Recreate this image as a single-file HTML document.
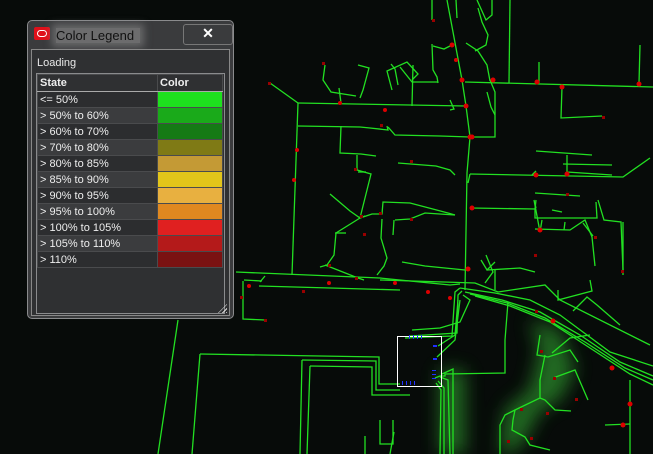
<!DOCTYPE html>
<html><head><meta charset="utf-8"><style>
body{margin:0;width:653px;height:454px;overflow:hidden;background:#070b09;font-family:"Liberation Sans",sans-serif;position:relative}
svg{position:absolute;left:0;top:0}
.win{position:absolute;left:27px;top:20px;width:207px;height:299px;background:#3a3b3d;border:1px solid #8a8b8d;border-radius:5px;box-sizing:border-box}
.ico{position:absolute;left:6px;top:6px;width:16px;height:13px;background:#e0101a;border-radius:2px}
.ico:after{content:"";position:absolute;left:3px;top:3px;width:8px;height:5px;border:1px solid #fff;border-radius:4px}
.ttext{position:absolute;left:28px;top:7px;font-size:13px;color:#111;background:rgba(150,150,150,0.55);padding:0 6px 0 0;box-shadow:0 0 8px 4px rgba(150,150,150,0.5)}
.close{position:absolute;left:155px;top:3px;width:48px;height:19px;border:1px solid #777;border-radius:3px;background:#3a3b3d;color:#fff;font-weight:bold;font-size:14px;text-align:center;line-height:17px}
.panel{position:absolute;left:3px;top:28px;width:199px;height:267px;border:1px solid #888;background:#2f3032;box-sizing:border-box}
.load{position:absolute;left:5px;top:7px;font-size:11px;color:#e8e8e8}
table{position:absolute;left:5px;top:24px;border-collapse:collapse;font-size:11px;color:#eee}
td{height:15px;padding:0 0 0 2px;border:1px solid #4a4b4d;white-space:nowrap}
tr.h td{height:16px;font-weight:bold;border-bottom:1px solid #aaa}
tr:nth-child(even) td{background:#2c2d2f} tr:nth-child(odd) td{background:#3b3c3e}
tr.h td{background:#2f3032}
.tb{position:absolute;left:4px;top:23px;width:187px;height:239px;border:1px solid #8a8b8d}
.grip{position:absolute;right:2px;bottom:2px;width:9px;height:9px;background:repeating-linear-gradient(135deg,#ddd 0 1px,transparent 1px 3px);clip-path:polygon(100% 0,100% 100%,0 100%)}
</style></head><body>
<svg width="653" height="454" viewBox="0 0 653 454">
<defs><filter id="b" x="-50%" y="-50%" width="200%" height="200%"><feGaussianBlur stdDeviation="9"/></filter></defs>
<g filter="url(#b)" fill="#2a8a2a" opacity="0.75">
<path d="M530 320 L560 330 L575 370 L560 400 L540 410 L525 440 L510 454 L500 454 L505 410 L530 390 L540 350 Z"/>
<rect x="440" y="370" width="25" height="84"/>
</g>
<g stroke="#22e022" stroke-width="1.3" fill="none">
<polyline points="447,0 462,80 466,106 470,137 467,173 465,290"/>
<polyline points="465,82 653,87"/>
<line x1="510" y1="0" x2="509" y2="83"/>
<polyline points="298,103 466,106"/>
<polyline points="298,103 292,275"/>
<polyline points="298,103 270,83"/>
<polyline points="298,126 360,127 370,128 388,130 387,126"/>
<polyline points="388,127 395,135 440,136 470,137 490,137 495,137 495,92 490,80"/>
<polyline points="470,174 623,177 650,158"/>
<polyline points="468,183 470,174"/>
<polyline points="536,151 592,155"/>
<polyline points="567,155 567,172 612,175"/>
<polyline points="563,164 612,165"/>
<polyline points="536,171 532,175"/>
<polyline points="536,200 535,209 535,218 597,218 596,202"/>
<polyline points="471,208 535,209"/>
<polyline points="535,193 580,196"/>
<polyline points="536,208 534,200 540,232 542,220"/>
<polyline points="535,229 570,230 585,220 592,237 595,266"/>
<polyline points="565,222 564,230"/>
<polyline points="598,200 604,220 621,222 623,270"/>
<polyline points="623,222 623,275"/>
<polyline points="562,212 552,210"/>
<polyline points="583,223 593,236"/>
<polyline points="330,194 350,211 360,218 365,216"/>
<polyline points="360,218 336,233 334,255 327,265 320,267"/>
<polyline points="335,233 346,233"/>
<polyline points="360,218 372,214 382,214 383,202 410,203 448,213 455,215"/>
<polyline points="382,219 381,238 387,258 384,266 377,275"/>
<polyline points="325,265 358,278 364,280"/>
<polyline points="341,126 340,153 361,154 376,156"/>
<polyline points="357,155 357,170 371,174 360,218"/>
<polyline points="358,172 366,172"/>
<polyline points="395,220 410,219 425,213 455,215"/>
<polyline points="450,110 454,109 450,100"/>
<polyline points="392,90 387,71 407,62 418,74 412,80"/>
<polyline points="358,65 369,68 363,90 360,98"/>
<polyline points="325,65 323,80 331,92 356,96"/>
<polyline points="339,88 341,103"/>
<polyline points="391,64 395,69 398,85"/>
<polyline points="432,0 432,20"/>
<polyline points="456,0 457,18"/>
<polyline points="477,0 486,20 492,15 492,0"/>
<polyline points="478,8 482,22 488,35 486,45 475,51"/>
<polyline points="466,43 478,51 487,65 490,81"/>
<polyline points="432,44 433,70 437,77 438,83"/>
<polyline points="433,46 444,49 452,45"/>
<polyline points="400,67 412,82 438,82"/>
<polyline points="413,65 412,106"/>
<polyline points="539,62 539,83"/>
<polyline points="640,45 639,83"/>
<polyline points="562,87 561,118 602,116"/>
<polyline points="487,92 491,107 495,115"/>
<polyline points="398,163 436,166 450,170 455,175"/>
<polyline points="394,220 393,235"/>
<polyline points="402,262 425,266 445,268 465,270"/>
<polyline points="486,255 493,272 485,283"/>
<polyline points="481,260 487,270 495,262"/>
<polyline points="487,270 520,268 535,272"/>
<polyline points="495,270 495,290"/>
<polyline points="236,272 380,278 450,285 460,284"/>
<polyline points="259,286 330,288 400,290"/>
<polyline points="244,280 262,281"/>
<polyline points="243,281 243,319 265,320"/>
<polyline points="260,282 265,276"/>
<polyline points="178,320 158,454"/>
<polyline points="200,354 379,357 379,384 400,384"/>
<polyline points="302,360 376,361 376,390 400,390"/>
<polyline points="310,366 372,367 372,395 410,395"/>
<polyline points="200,354 192,454"/>
<polyline points="302,360 300,454"/>
<polyline points="310,366 307,454"/>
<polyline points="380,420 380,444 393,444 393,420"/>
<polyline points="365,436 365,454"/>
<polyline points="394,432 390,454"/>
<polyline points="380,280 475,283 498,292 545,285 560,300 650,345"/>
<polyline points="412,330 440,328 460,322 470,300 463,295"/>
<polyline points="410,336 457,333 458,295 462,291"/>
<polyline points="405,338 452,336 455,292 460,288"/>
<polyline points="460,288 495,293 530,300 560,315 610,352 653,366"/>
<polyline points="465,292 502,300 540,312 580,335 620,362 653,376"/>
<polyline points="470,294 507,303 545,318 585,342 625,368 653,380"/>
<polyline points="475,296 510,306 550,322 590,348 630,374 653,385"/>
<polyline points="508,302 505,340 505,373 445,374 445,376 440,376 435,378"/>
<polyline points="442,374 453,369 453,454"/>
<polyline points="440,377 448,380 450,454"/>
<polyline points="438,381 444,388 444,454"/>
<polyline points="436,383 441,390 440,454"/>
<polyline points="437,357 455,340 460,300"/>
<polyline points="438,346 455,335 458,300"/>
<polyline points="558,290 558,300 592,291 590,280"/>
<polyline points="573,311 587,297 597,305 620,325"/>
<polyline points="630,380 630,454"/>
<polyline points="605,425 630,424"/>
<polyline points="540,335 537,355 548,357 570,350 578,362"/>
<polyline points="552,353 570,338 590,335"/>
<polyline points="553,378 575,370 588,400"/>
<polyline points="545,355 540,380 540,398 515,410 513,420"/>
<polyline points="540,398 545,400 555,410 571,411"/>
<polyline points="513,420 512,430 525,437 530,445 550,450"/>
<polyline points="515,410 505,415 500,425 500,454"/>
</g>
<g fill="#d00">
<circle cx="462" cy="80" r="2.5"/><circle cx="466" cy="106" r="2.5"/><circle cx="470" cy="137" r="2.5"/><circle cx="493" cy="80" r="2.5"/>
<circle cx="537" cy="82" r="2.5"/><circle cx="562" cy="87" r="2.5"/><circle cx="639" cy="84" r="2.5"/><circle cx="452" cy="45" r="2.5"/>
<circle cx="456" cy="60" r="2"/><circle cx="472" cy="137" r="2.5"/><circle cx="536" cy="175" r="2.5"/><circle cx="567" cy="174" r="2.5"/>
<circle cx="540" cy="230" r="2.5"/><circle cx="472" cy="208" r="2.5"/><circle cx="468" cy="269" r="2.5"/>
<circle cx="553" cy="321" r="2.5"/><circle cx="612" cy="368" r="2.5"/><circle cx="630" cy="404" r="2.5"/><circle cx="623" cy="425" r="2.5"/>
<circle cx="428" cy="292" r="2"/><circle cx="450" cy="298" r="2"/><circle cx="395" cy="283" r="2"/><circle cx="329" cy="283" r="2"/><circle cx="249" cy="286" r="2"/>
<circle cx="385" cy="110" r="2"/><circle cx="340" cy="103" r="2"/><circle cx="294" cy="180" r="2"/><circle cx="297" cy="150" r="2"/>
</g>
<g fill="#900">
<rect x="268" y="82" width="3" height="3"/><rect x="322" y="62" width="3" height="3"/><rect x="360" y="215" width="3" height="3"/><rect x="410" y="218" width="3" height="3"/>
<rect x="328" y="264" width="3" height="3"/><rect x="355" y="277" width="3" height="3"/><rect x="380" y="124" width="3" height="3"/><rect x="354" y="168" width="3" height="3"/>
<rect x="363" y="233" width="3" height="3"/><rect x="379" y="212" width="3" height="3"/><rect x="432" y="19" width="3" height="3"/><rect x="602" y="116" width="3" height="3"/>
<rect x="566" y="193" width="3" height="3"/><rect x="594" y="236" width="3" height="3"/><rect x="621" y="270" width="3" height="3"/><rect x="534" y="254" width="3" height="3"/>
<rect x="575" y="398" width="3" height="3"/><rect x="546" y="412" width="3" height="3"/><rect x="530" y="437" width="3" height="3"/><rect x="553" y="377" width="3" height="3"/>
<rect x="520" y="408" width="3" height="3"/><rect x="535" y="310" width="3" height="3"/><rect x="540" y="350" width="3" height="3"/><rect x="507" y="440" width="3" height="3"/>
<rect x="410" y="160" width="3" height="3"/><rect x="302" y="290" width="3" height="3"/><rect x="264" y="319" width="3" height="3"/><rect x="240" y="296" width="3" height="3"/>
</g>
<rect x="397.5" y="336.5" width="44" height="50" fill="none" stroke="#fff" stroke-width="1"/>
<g fill="#2030ff"><rect x="409" y="335" width="1" height="4"/><rect x="413" y="335" width="1" height="4"/><rect x="417" y="335" width="1" height="4"/><rect x="421" y="335" width="1" height="4"/>
<rect x="433" y="345" width="4" height="2"/><rect x="433" y="358" width="4" height="2"/><rect x="432" y="370" width="4" height="1"/><rect x="432" y="374" width="4" height="1"/><rect x="432" y="378" width="4" height="1"/>
<rect x="402" y="381" width="1" height="4"/><rect x="406" y="381" width="1" height="4"/><rect x="410" y="381" width="1" height="4"/><rect x="414" y="381" width="1" height="4"/></g>
</svg>
<div class="win">
<div class="ico"></div><div class="ttext">Color Legend</div>
<div class="close">✕</div>
<div class="panel">
<div class="load">Loading</div>
<div class="tb"></div>
<table>
<tr class="h"><td style="width:117px">State</td><td style="width:62px">Color</td></tr>
<tr><td>&lt;= 50%</td><td style="background:#1ee01e"></td></tr>
<tr><td>&gt; 50% to 60%</td><td style="background:#1aaa1a"></td></tr>
<tr><td>&gt; 60% to 70%</td><td style="background:#157a15"></td></tr>
<tr><td>&gt; 70% to 80%</td><td style="background:#7f7a15"></td></tr>
<tr><td>&gt; 80% to 85%</td><td style="background:#c49a35"></td></tr>
<tr><td>&gt; 85% to 90%</td><td style="background:#e2c51a"></td></tr>
<tr><td>&gt; 90% to 95%</td><td style="background:#e8b040"></td></tr>
<tr><td>&gt; 95% to 100%</td><td style="background:#e08820"></td></tr>
<tr><td>&gt; 100% to 105%</td><td style="background:#e02020"></td></tr>
<tr><td>&gt; 105% to 110%</td><td style="background:#b41a1a"></td></tr>
<tr><td>&gt; 110%</td><td style="background:#7a1212"></td></tr>
</table>
<div class="grip"></div>
</div>
</div>
</body></html>
